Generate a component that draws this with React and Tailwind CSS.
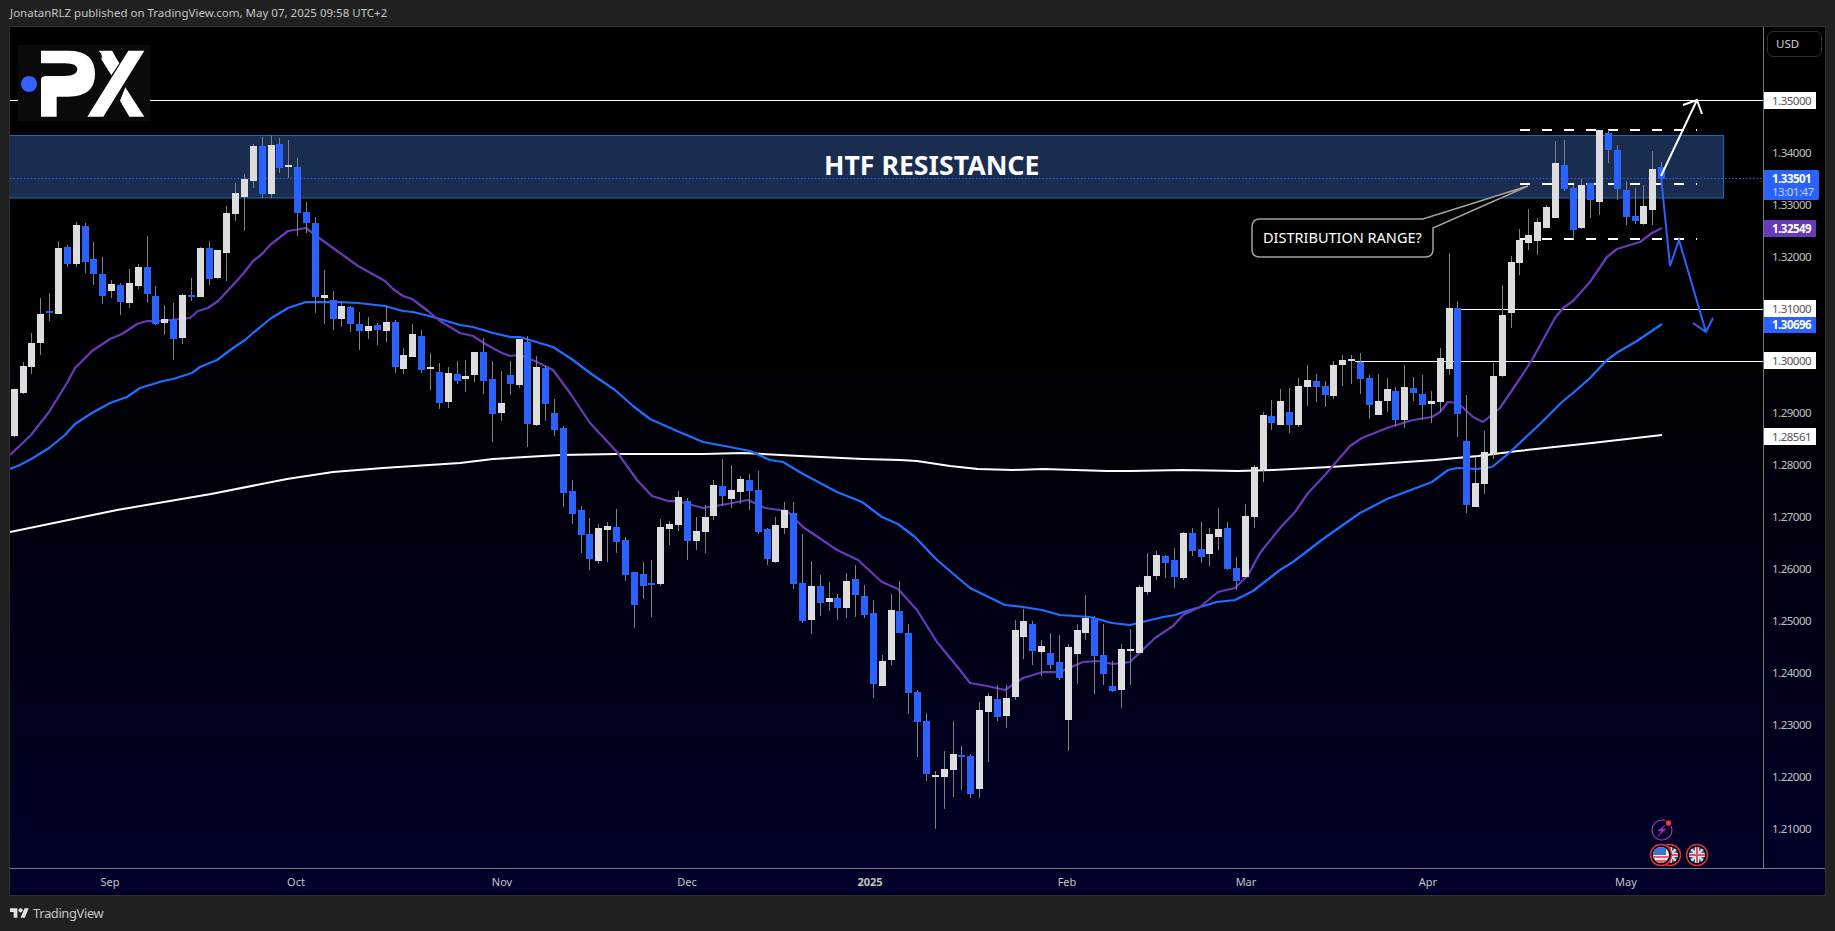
import React from "react";

// [wick top, body top, body bottom, wick bottom, 1 = white / 0 = blue]
const candles = [
  [389,389,436,437,1],[362,366,393,394,1],[333,343,367,374,1],[298,314,343,355,1],[293,311,313,321,0],
  [241,248,314,314,1],[245,247,264,267,0],[222,225,264,267,1],[223,226,262,273,0],[242,259,274,285,0],
  [257,274,296,304,0],[280,284,291,298,1],[283,285,302,315,0],[269,283,303,308,1],[264,267,286,289,1],
  [236,267,294,303,0],[286,296,324,325,0],[305,319,323,335,1],[303,320,339,360,0],[294,295,338,344,1],
  [278,295,297,301,0],[247,248,297,297,1],[241,248,279,285,0],[250,250,278,279,1],[206,213,253,281,1],
  [183,193,214,221,1],[174,179,197,231,1],[144,146,181,188,1],[137,146,194,198,0],[135,145,194,198,1],
  [138,144,168,173,0],[140,165,167,178,1],[158,167,213,236,0],[202,212,223,233,0],[217,223,297,313,0],
  [270,295,298,324,1],[291,300,319,330,0],[302,306,319,327,1],[306,307,324,332,0],[312,324,331,350,0],
  [317,326,331,339,1],[323,325,330,345,0],[306,322,331,342,1],[320,322,367,373,0],[348,355,369,374,1],
  [324,334,357,357,1],[330,336,370,373,0],[353,367,369,390,1],[363,372,403,409,0],[367,373,402,408,1],
  [361,374,381,384,0],[360,376,379,392,1],[352,352,375,382,1],[338,352,381,394,0],[361,379,414,442,0],
  [371,403,413,421,1],[361,375,384,395,0],[339,339,385,388,1],[336,342,424,447,0],[356,367,425,426,1],
  [366,368,404,421,0],[399,413,430,436,0],[426,428,493,507,0],[480,491,514,524,0],[506,510,535,553,0],
  [518,534,559,570,0],[524,528,561,564,1],[522,526,530,562,1],[509,527,542,553,0],[537,540,575,581,0],
  [572,572,605,628,0],[562,574,586,599,0],[560,583,585,617,0],[519,527,584,586,1],[521,524,529,545,1],
  [491,497,525,531,1],[498,501,541,560,0],[517,531,541,550,1],[505,517,532,553,1],[480,485,516,520,1],
  [459,486,496,506,0],[465,490,499,508,1],[476,479,492,504,1],[474,480,491,510,0],[471,490,532,534,0],
  [528,529,559,565,0],[517,525,562,563,1],[502,510,528,534,1],[502,513,584,589,0],[534,583,621,623,0],
  [561,586,620,634,1],[575,586,603,616,0],[582,598,602,611,1],[594,598,608,620,0],[573,581,608,618,1],
  [565,579,595,617,0],[585,596,615,618,0],[600,613,684,698,0],[655,661,686,686,1],[594,610,660,665,1],
  [581,611,633,633,0],[624,633,693,714,0],[690,692,722,757,0],[713,721,774,781,0],[771,775,777,829,1],
  [751,769,777,809,1],[721,754,770,797,1],[746,755,757,790,0],[754,756,794,798,0],[702,710,789,798,1],
  [693,696,712,762,1],[685,699,717,721,0],[685,698,716,728,1],[620,630,697,700,1],[609,621,637,659,1],
  [621,624,651,665,0],[640,646,652,676,1],[633,653,665,669,0],[635,662,678,680,0],[644,647,720,751,1],
  [624,630,654,684,1],[595,618,633,640,1],[616,618,656,694,0],[624,655,674,685,0],[661,686,691,692,0],
  [644,649,690,708,1],[629,649,651,685,1],[585,587,653,653,1],[553,576,592,595,1],[551,555,576,580,1],
  [555,556,563,578,0],[548,560,577,588,0],[532,533,578,580,1],[528,533,551,556,0],[522,549,557,563,0],
  [528,534,554,566,1],[508,529,537,550,1],[522,528,569,570,0],[557,568,581,590,0],[504,516,577,577,1],
  [465,467,517,528,1],[412,415,470,482,1],[400,416,423,430,0],[389,401,425,425,1],[388,412,425,433,0],
  [378,386,425,427,1],[365,380,387,406,1],[374,381,387,402,0],[381,386,395,407,0],[361,365,396,399,1],
  [355,360,365,386,1],[355,359,361,384,1],[353,362,379,394,0],[375,378,405,419,0],[374,401,415,415,1],
  [378,389,401,412,1],[387,391,420,426,0],[365,387,420,428,1],[377,388,393,401,0],[375,394,405,420,0],
  [391,401,404,423,1],[348,358,402,412,1],[253,308,369,375,1],[301,308,414,437,0],[395,441,505,513,0],
  [457,483,507,507,1],[431,452,484,494,1],[363,376,454,459,1],[285,315,376,377,1],[256,262,313,328,1],
  [229,240,263,275,1],[209,235,243,250,1],[218,222,241,255,1],[205,207,228,228,1],[141,163,218,218,1],
  [140,165,189,191,0],[185,188,230,239,0],[179,185,228,229,1],[183,183,200,218,0],[130,130,202,215,1],
  [130,133,150,163,0],[145,150,189,200,0],[181,190,217,225,0],[188,216,221,224,0],[185,206,224,225,1],
  [151,169,210,225,1],[162,167,179,179,0],
];

const purpleMa = "10,455 31,435 49,412 67,383 75,368 92,351 110,339 122,334 137,324 147,321 160,321 190,318 198,311 208,308 218,301 233,285 243,274 253,261 262,254 270,245 288,231 306,228 315,235 333,248 358,266 385,281 393,289 403,296 412,299 428,311 440,321 460,333 473,336 487,345 502,353 510,356 520,355 537,362 553,370 570,393 590,423 617,452 637,480 652,496 668,501 677,501 703,508 727,504 748,500 765,508 787,511 803,527 837,550 858,560 872,573 882,582 898,589 917,610 937,642 960,670 970,683 987,686 1005,690 1023,678 1043,672 1060,672 1083,662 1097,661 1113,664 1130,662 1155,638 1173,626 1183,615 1200,607 1218,592 1235,588 1248,575 1260,553 1280,528 1295,512 1308,493 1325,475 1350,446 1362,438 1387,428 1413,420 1432,417 1440,412 1448,402 1458,403 1473,417 1483,422 1500,408 1517,383 1532,360 1555,318 1563,308 1573,301 1590,282 1607,257 1617,249 1640,242 1652,233 1662,228";
const blueMa = "10,469 20,465 33,458 49,448 65,435 75,424 92,413 110,403 127,397 140,388 163,381 173,379 192,373 200,367 217,360 233,348 245,340 253,333 270,319 288,308 306,302 337,302 358,303 385,306 403,311 413,312 433,317 460,325 473,327 493,333 510,337 520,337 533,341 553,347 573,360 590,373 615,390 633,406 650,419 677,431 703,442 730,447 750,451 770,460 783,462 803,474 837,492 862,502 882,517 898,524 915,537 937,560 970,588 1005,605 1023,607 1042,610 1060,615 1090,617 1112,623 1130,625 1163,617 1175,615 1190,610 1217,602 1235,600 1253,591 1280,570 1293,562 1323,539 1360,513 1387,499 1432,482 1448,470 1457,468 1477,469 1492,467 1508,454 1542,422 1562,402 1573,393 1590,378 1607,360 1618,352 1637,341 1662,324";
const whiteMa = "10,532 117,510 211,494 287,479 333,472 383,468 460,463 493,459 560,455 617,454 703,454 743,453 800,456 863,459 900,460 917,461 950,466 978,469 1013,470 1043,469 1107,471 1130,471 1183,470 1238,471 1273,470 1330,467 1377,464 1435,460 1478,456 1518,451 1592,443 1662,435";

const priceRows = [
  { label: "1.35000", white: true },
  { label: "1.34000" },
  { label: "1.33000" },
  { label: "1.32000" },
  { label: "1.31000", white: true },
  { label: "1.30000", white: true },
  { label: "1.29000" },
  { label: "1.28000" },
  { label: "1.27000" },
  { label: "1.26000" },
  { label: "1.25000" },
  { label: "1.24000" },
  { label: "1.23000" },
  { label: "1.22000" },
  { label: "1.21000" },
];

const months = [
  { label: "Sep", cls: "w-[200px]" },
  { label: "Oct", cls: "w-[172px]" },
  { label: "Nov", cls: "w-[240px]" },
  { label: "Dec", cls: "w-[130px]" },
  { label: "2025", cls: "w-[236px] font-bold" },
  { label: "Feb", cls: "w-[158px]" },
  { label: "Mar", cls: "w-[200px]" },
  { label: "Apr", cls: "w-[164px]" },
  { label: "May", cls: "w-[232px]" },
];

function Candles() {
  return candles.map((c, i) => {
    const left = Math.round(10.7 + 8.857 * i);
    return (
      <g key={i}>
        <rect x={left + 3} y={c[0]} width="1" height={c[3] - c[0]} fill="#808080" />
        <rect x={left} y={c[1]} width="7" height={c[2] - c[1]} fill={c[4] ? "#dddddd" : "#2962ff"} />
      </g>
    );
  });
}

function UkFlag({ cx, cy, id }) {
  return (
    <g>
      <circle cx={cx} cy={cy} r="10.5" fill="#000" stroke="#e03040" strokeWidth="1.5" />
      <clipPath id={id}>
        <circle cx={cx} cy={cy} r="8" />
      </clipPath>
      <g clipPath={`url(#${id})`}>
        <rect x={cx - 8} y={cy - 8} width="16" height="16" fill="#2b5fa8" />
        <path d={`M${cx - 8} ${cy - 8}L${cx + 8} ${cy + 8}M${cx + 8} ${cy - 8}L${cx - 8} ${cy + 8}`} stroke="#f0d0d8" strokeWidth="2.5" />
        <path d={`M${cx} ${cy - 8}V${cy + 8}M${cx - 8} ${cy}H${cx + 8}`} stroke="#f0e6ea" strokeWidth="4" />
        <path d={`M${cx} ${cy - 8}V${cy + 8}M${cx - 8} ${cy}H${cx + 8}`} stroke="#e0506a" strokeWidth="2" />
      </g>
    </g>
  );
}

function UsFlag({ cx, cy }) {
  return (
    <g>
      <circle cx={cx} cy={cy} r="10.5" fill="#000" stroke="#e03040" strokeWidth="1.5" />
      <clipPath id="usclip">
        <circle cx={cx} cy={cy} r="8" />
      </clipPath>
      <g clipPath="url(#usclip)">
        <rect x={cx - 8} y={cy - 8} width="16" height="16" fill="#f4f0f0" />
        <rect x={cx - 8} y={cy + 1} width="16" height="2" fill="#f05a60" />
        <rect x={cx - 8} y={cy + 5} width="16" height="3" fill="#f05a60" />
        <rect x={cx - 8} y={cy - 8} width="13" height="8" fill="#3f72d8" />
      </g>
    </g>
  );
}

function Logo() {
  return (
    <g>
      <rect x="18" y="45" width="132" height="76" fill="#0a0a0a" />
      <circle cx="29" cy="84" r="8" fill="#3461ff" />
      <g transform="scale(0.3333)" fill="#ffffff">
        <path d="M123 152H205Q285 152 285 222Q285 290 205 290H170V350H123V240Q123 228 140 228H195Q232 228 232 208Q232 190 195 190H123Z" />
        <path d="M385 152H433L310 350H262Z" />
        <path d="M296 152H336L358 190L334 226L304 178Q310 165 296 152Z" />
        <path d="M376 262L433 350H388L360 302Z" />
      </g>
    </g>
  );
}

function ChartDrawing() {
  return (
    <svg viewBox="10 27 1753 841" className="absolute inset-0 h-full w-full">
      <line x1="10" y1="100.5" x2="1763" y2="100.5" stroke="#ffffff" />
      <rect x="9" y="135.5" width="1714.5" height="62.5" fill="#1a2d50" stroke="#1b6cb0" />
      <line x1="10" y1="178.5" x2="1763" y2="178.5" stroke="#2962ff" strokeDasharray="1.5 2" />
      <line x1="1461" y1="309.5" x2="1763" y2="309.5" stroke="#ffffff" />
      <line x1="1355" y1="361.5" x2="1763" y2="361.5" stroke="#ffffff" />
      {[130, 184, 239].map((y) => (
        <line key={y} x1="1520" y1={y} x2="1697" y2={y} stroke="#ffffff" strokeWidth="2" strokeDasharray="10 12" />
      ))}

      <polyline points={whiteMa} fill="none" stroke="#ffffff" strokeWidth="2" strokeLinejoin="round" />
      <polyline points={blueMa} fill="none" stroke="#1f6fff" strokeWidth="2.25" strokeLinejoin="round" />
      <polyline points={purpleMa} fill="none" stroke="#673ab7" strokeWidth="2.25" strokeLinejoin="round" />

      <Candles />

      <path
        d="M1260 219H1423L1528 186L1433 228V249Q1433 257 1425 257H1260Q1252 257 1252 249V227Q1252 219 1260 219Z"
        fill="#000000"
        stroke="#a0a0a0"
        strokeWidth="1.5"
      />

      <path d="M1661 176L1697 100M1683 105L1697 100L1702 114" fill="none" stroke="#ffffff" strokeWidth="2" />
      <path d="M1661 176L1670 266L1679 240L1706 332M1693 323L1706 332L1713 318" fill="none" stroke="#2962ff" strokeWidth="2" />

      <Logo />

      <circle cx="1662" cy="830" r="10" fill="none" stroke="#9c34b0" strokeWidth="1.2" />
      <path d="M1666 824L1658 831H1662L1658 836L1666 829H1662Z" fill="#9c34b0" stroke="#9c34b0" strokeWidth="0.6" />
      <circle cx="1668.5" cy="823" r="4" fill="#000016" />
      <circle cx="1668.5" cy="823" r="2.7" fill="#f23645" />
      <UkFlag cx={1670} cy={855} id="ukclip1" />
      <UsFlag cx={1661} cy={855} />
      <UkFlag cx={1697} cy={855} id="ukclip2" />
    </svg>
  );
}

function PriceAxis() {
  return (
    <div className="relative flex w-[62px] flex-col border-l border-[#787878] pt-[4px] text-[11.5px] leading-none tracking-[-0.5px] text-[#c0c0c0]">
      <div className="ml-[3px] flex h-[26px] w-[55px] items-center rounded-[6px] border border-[#2e2e2e] pl-[8px] tracking-normal text-[#d0d0d0]">
        USD
      </div>
      <div className="mt-[17.5px] flex flex-col">
        {priceRows.map((r) => (
          <div key={r.label} className="flex h-[52.05px] items-center">
            {r.white ? (
              <span className="flex h-[17px] w-[52px] items-center bg-white pl-[8px] text-[#555555]">{r.label}</span>
            ) : (
              <span className="pl-[8px]">{r.label}</span>
            )}
          </div>
        ))}
      </div>
      <span className="absolute left-0 top-[401px] flex h-[17px] w-[52px] items-center bg-white pl-[8px] text-[#555555]">1.28561</span>
      <span className="absolute left-0 top-[193px] flex h-[17px] w-[52px] items-center bg-[#673ab7] pl-[8px] font-bold text-white">1.32549</span>
      <span className="absolute left-0 top-[290px] flex h-[16px] w-[52px] items-center bg-[#2962ff] pl-[8px] font-bold text-white">1.30696</span>
      <div className="absolute left-0 top-[143px] flex h-[30px] w-[55px] flex-col justify-center gap-[2px] rounded-r-[2px] bg-[#2962ff] pl-[8px]">
        <span className="font-bold text-white">1.33501</span>
        <span className="text-[#c6d4ff]">13:01:47</span>
      </div>
    </div>
  );
}

function TimeAxis() {
  return (
    <div className="flex h-[27px] items-center border-t border-[#787878] text-[11px] text-[#c4c4c4]">
      {months.map((m) => (
        <span key={m.label} className={`text-center ${m.cls}`}>
          {m.label}
        </span>
      ))}
    </div>
  );
}

export default function App() {
  return (
    <div className="flex h-[931px] w-full flex-col bg-[#202020] font-['Noto_Sans','Liberation_Sans',sans-serif]">
      <div className="flex h-[26px] items-center pl-[10px] text-[11.5px] text-[#c4c4c4]">
        JonatanRLZ published on TradingView.com, May 07, 2025 09:58 UTC+2
      </div>

      <div className="mx-[9px] flex h-[870px] flex-col border border-[#2f2f2f] bg-linear-to-b from-[#000000] to-[#00002a]">
        <div className="flex flex-1">
          <div className="relative flex-1">
            <ChartDrawing />
            <div className="absolute left-[814px] top-[120px] text-[26.7px] font-bold leading-[36px] text-white">
              HTF RESISTANCE
            </div>
            <div className="absolute left-[1253px] top-[200px] text-[14.5px] leading-[20px] text-white">
              DISTRIBUTION RANGE?
            </div>
          </div>
          <PriceAxis />
        </div>
        <TimeAxis />
      </div>

      <div className="flex flex-1 items-center gap-[4px] pl-[10px] text-[13px] tracking-[-0.4px] text-[#c4c4c4]">
        <svg viewBox="0 0 36 28" className="h-[15px] w-[19px]" fill="#e0e0e0">
          <path d="M14 22H7V11H0V4h14v18zM28 22h-8l7.5-18h8L28 22z" />
          <circle cx="20" cy="8" r="4" />
        </svg>
        TradingView
      </div>
    </div>
  );
}
